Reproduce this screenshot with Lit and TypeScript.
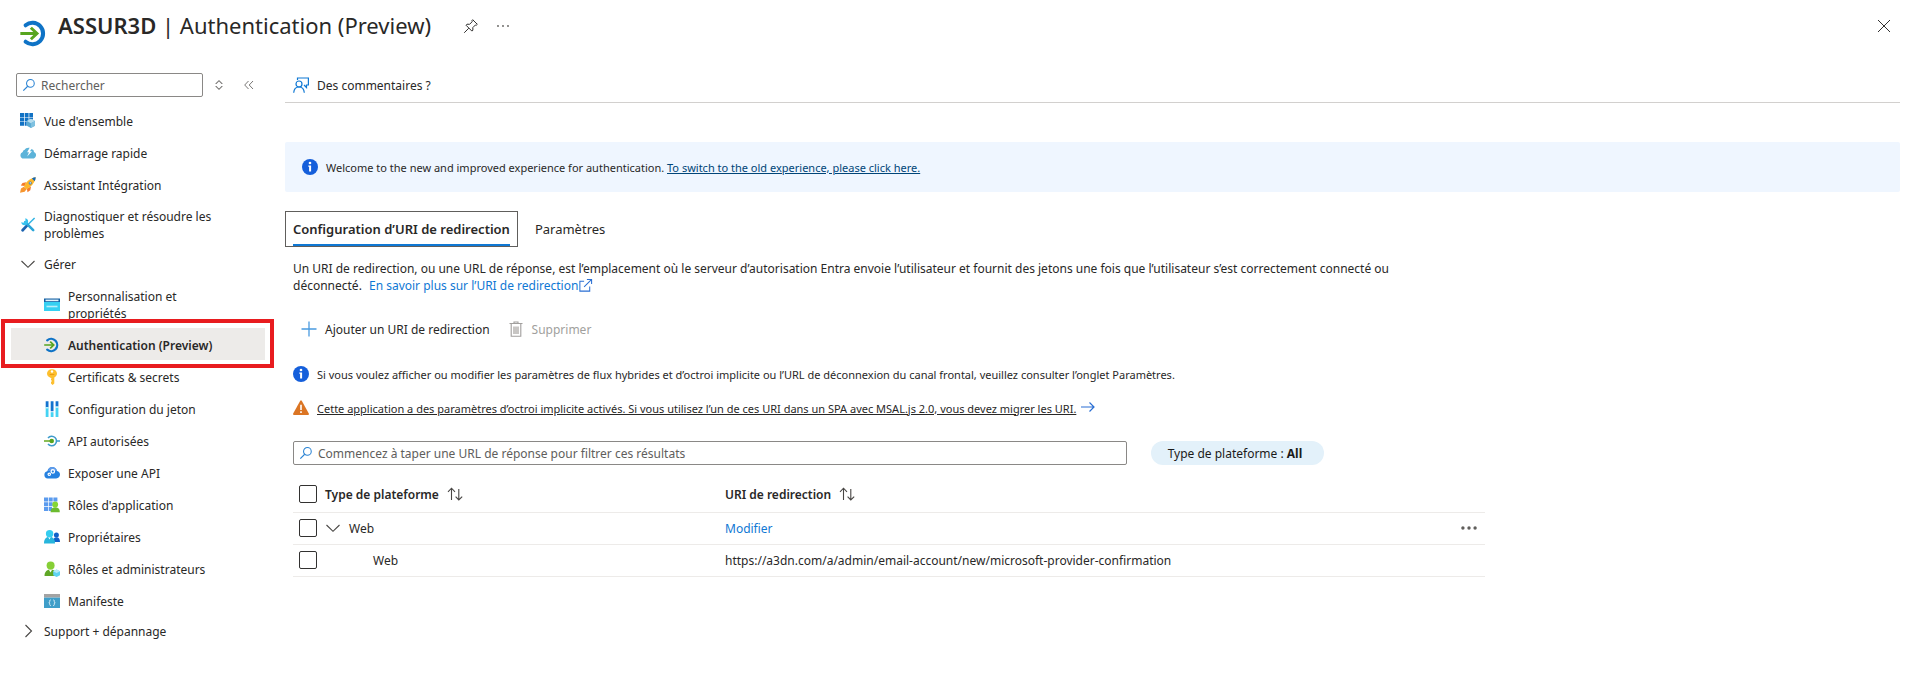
import { LitElement, html, css, svg, nothing, TemplateResult } from "lit";
import { customElement, state } from "lit/decorators.js";
import { classMap } from "lit/directives/class-map.js";

const icon = (body: TemplateResult, size = 16, box = "0 0 16 16") =>
  html`<svg class="icon" width=${size} height=${size} viewBox=${box} aria-hidden="true">${body}</svg>`;

const authShape = svg`
  <path d="M3.2 3.3A6.1 6.1 0 1 1 3.2 12.7" fill="none" stroke="#0f73c6" stroke-width="2.3" stroke-linecap="round"/>
  <path d="M.2 8H9.6M6.2 4.7 9.7 8 6.2 11.3" fill="none" stroke="#57a51f" stroke-width="1.7"/>`;

const search = svg`
  <circle cx="9.6" cy="6.2" r="4.4" fill="none" stroke="#2a83d3" stroke-width="1.2"/>
  <path d="M6.5 9.4 1.5 14.4" stroke="#2a83d3" stroke-width="1.3"/>`;

const info = svg`
  <circle cx="8" cy="8" r="8" fill="#155fdb"/>
  <circle cx="8" cy="4" r="1.3" fill="#fff"/>
  <path d="M6.3 6.500H9.100V12.600H7.100V7.800H6.300Z" fill="#fff"/>`;

const chevronDown = svg`<path d="M1.500 5 8 11.300 14.500 5" fill="none" stroke="#484644" stroke-width="1.1"/>`;
const chevronRight = svg`<path d="M5.500 2 11.500 8 5.500 14" fill="none" stroke="#484644" stroke-width="1.1"/>`;
const sortArrows = svg`<path d="M4.500 14V2.300M1 5.800 4.500 2.200 8 5.800M11.800 3V14M8.600 10.600 11.800 14 15.200 10.600" fill="none" stroke="#484644" stroke-width="1.1"/>`;

const glyphs: Record<string, TemplateResult> = {
  overview: svg`
    <g fill="#1272c4"><path d="M0 0h4v4H0zM4.700 0h3.900v4H4.700zM9.300 0h3.700v4H9.300zM0 4.600h4v3.800H0zM4.700 4.600h3.900v3.800H4.700zM9.300 4.600h3.700v2H9.300zM0 9h4v3.700H0zM4.700 9h2v3.700h-2z"/></g>
    <path d="M10.900 5.800 15 8v4.800L10.900 15 6.800 12.800V8z" fill="#5aa9d3"/>
    <path d="M10.900 5.800 15 8 10.900 10.200 6.800 8z" fill="#b4dcee"/><path d="M10.900 10.200 15 8v4.800L10.900 15z" fill="#7fc1e0"/>`,
  cloud: svg`
    <path d="M3.600 13.600A3.400 3.400 0 0 1 2.700 7 2.600 2.600 0 0 1 4.700 4.800C5.700 2.600 9.600 1.800 11.600 4.200 13.200 4.300 14 5.400 13.900 7c1.600.7 2.300 2 2.100 3.500-.2 1.900-1.700 3.100-3.400 3.100z" fill="#5cb3d9"/>
    <path d="M9.800 2.400 7.100 7.300H9L7.200 11.600 12 6.300H9.900L12.300 2.700z" fill="#fff"/>`,
  rocket: svg`
    <path d="M3.800 9.700 1 11.500 0 15.700 4.600 14.700 6.800 12z" fill="#f7952d"/>
    <path d="M6.300 5.200 2.500 6 .8 8.600 4.600 9zM11 9.600 10.300 13.200 7.500 15.300 6.900 11.500z" fill="#f47b2a"/>
    <path d="M15.700.3C11 .8 6.300 4.200 4 9.500L6.700 12.200C11.800 9.500 15.200 5 15.700.3z" fill="#fdb72c"/>
    <path d="M15.700.3C14.400.4 13 .8 11.900 1.400L14.700 4.200C15.300 3 15.700 1.600 15.700.3z" fill="#1268b8"/>
    <circle cx="10.200" cy="5.900" r="1.500" fill="#1a6fc4"/><circle cx="10.200" cy="5.900" r=".8" fill="#cfe8fa"/>`,
  tools: svg`
    <path d="M14.600 1 6.500 9" stroke="#33b4e3" stroke-width="1.500"/>
    <path d="M7.200 8.400 2.600 13.200" stroke="#1d63b0" stroke-width="2.800" stroke-linecap="round"/>
    <path d="M5.200 5.200 13.200 13.200" stroke="#2aa5d8" stroke-width="2.600" stroke-linecap="round"/>
    <path d="M5.300 1.200A3.500 3.500 0 1 1 1.200 5.300L3.500 5.700 5.500 3.700z" fill="#37c2ef"/>`,
  window: svg`
    <path d="M0 1.500h16V5H0z" fill="#115ea3"/><path d="M1.500 2.600h13v1.600h-13z" fill="#e6f4fb"/>
    <path d="M0 5h16v9H0z" fill="#35d0f2"/><path d="M2.500 8.700h11v1.600h-11z" fill="#b9effa"/>`,
  auth: authShape,
  key: svg`
    <path d="M8 .2c3.100 0 5 1.900 5 4.400 0 1.900-1.100 3-2.700 3.800v6L8.600 16 7 14.400v-1.300l1-1-1-1v-1l.7-.7L6 8.500C4.200 7.800 3 6.600 3 4.600 3 2.100 4.900.2 8 .2z" fill="#fdbf2e"/>
    <circle cx="8" cy="2.500" r="1.200" fill="#fff"/><path d="M5.700 5h4.600v.8H5.700z" fill="#e8930c"/>`,
  token: svg`
    <path d="M1.700.2h2.800V6H1.700zM6.700.2h2.800v10H6.700zM11.600.2h2.800v5.200h-2.800z" fill="#1373cf"/>
    <path d="M1.700 6h2.800v10H1.700zM11.600 6.500h2.800V16h-2.800z" fill="#45d3f3"/><path d="M1.700 6h2.800v1.500H1.700zM11.600 5.400h2.800v1.500h-2.800z" fill="#b9effa"/>
    <path d="M6.700 11.200h2.800V16H6.700z" fill="#45d3f3"/>`,
  api: svg`
    <path d="M4 4.900A4.800 4.800 0 1 1 4 11.100" fill="none" stroke="#3d9bcb" stroke-width="1.500"/>
    <path d="M12.300 8H16" stroke="#3d9bcb" stroke-width="1.500"/>
    <path d="M0 8H7" stroke="#6fae2c" stroke-width="1.600"/><circle cx="7.700" cy="8" r="2.300" fill="#57a51f"/>`,
  expose: svg`
    <path d="M3.700 13.500A3.700 3.700 0 0 1 3.300 6.200C4 3.600 5.800 2 8.200 2c2.500 0 4.400 1.700 4.900 4 1.800.3 2.900 1.700 2.900 3.600 0 2.200-1.600 3.900-3.800 3.900z" fill="#2581e0"/>
    <path d="M4 6C4.600 3.500 6.200 2 8.200 2c2.500 0 4.400 1.700 4.900 4z" fill="#5f9bea"/>
    <circle cx="8.800" cy="6.400" r="1.700" fill="none" stroke="#fff" stroke-width="1.300"/><circle cx="5.300" cy="9.300" r="1.200" fill="none" stroke="#fff" stroke-width="1.200"/>`,
  approles: svg`
    <path d="M0 .5h4v4H0zM4.700.5h4v4h-4zM9.400.5h4v4h-4zM0 5.200h4v4H0zM4.700 5.200h4v4h-4zM0 9.900h4v4H0zM4.700 9.900H8v4H4.700z" fill="#5b9bee"/>
    <path d="M6.600 15.200c0-3.400 1.700-4.900 4.600-4.900s4.600 1.500 4.600 4.900z" fill="#6cbb2f"/><circle cx="11.200" cy="7.500" r="2.900" fill="#86d633"/>`,
  owners: svg`
    <path d="M9 13c0-3 1.200-4.800 3.500-4.800S16 10 16 13z" fill="#1161c9"/><circle cx="12.400" cy="6" r="2.500" fill="#1161c9"/>
    <path d="M0 14.400C0 10.200 2 7.800 5.500 7.800S11 10.200 11 14.400z" fill="#28b5dc"/><path d="M4.200 8h2.600L5.500 10.500z" fill="#fff"/>
    <circle cx="5.600" cy="4.700" r="3.700" fill="#35cdf0"/>`,
  admins: svg`
    <path d="M.5 15C.5 11 2.600 8.500 6.500 8.500s6 2.500 6 6.500z" fill="#5fa726"/><path d="M4.800 8.500h3.400L6.500 11.500z" fill="#fff"/>
    <circle cx="6.600" cy="4.600" r="4" fill="#86cf36"/>
    <path d="M12.600 8.600 16 10.300v3.900L12.600 16 9.200 14.200v-3.900z" fill="#5fd3f2"/><path d="M12.600 8.600 16 10.300 12.600 12 9.200 10.300z" fill="#b5ecfa"/>`,
  manifest: svg`
    <path d="M0 1h16v3.600H0z" fill="#a3a3a3"/><path d="M0 4.600h16V15H0z" fill="#3f9ec9"/>
    <path d="M6.800 6.900c-1.300 0-1.100.7-1.100 1.700 0 .7-.2 1-.9 1.100.7.100.9.400.9 1.100 0 1-.2 1.800 1.100 1.800M9.200 6.900c1.300 0 1.100.7 1.100 1.700 0 .7.200 1 .9 1.100-.7.100-.9.400-.9 1.100 0 1 .2 1.800-1.100 1.800" fill="none" stroke="#e6f4fb" stroke-width=".9"/>`,
};

interface Entry { label: string; glyph: string; tall?: boolean; }

const general: Entry[] = [
  { label: "Vue d'ensemble", glyph: "overview" },
  { label: "Démarrage rapide", glyph: "cloud" },
  { label: "Assistant Intégration", glyph: "rocket" },
  { label: "Diagnostiquer et résoudre les problèmes", glyph: "tools", tall: true },
];

const manage: Entry[] = [
  { label: "Personnalisation et propriétés", glyph: "window", tall: true },
  { label: "Authentication (Preview)", glyph: "auth" },
  { label: "Certificats & secrets", glyph: "key" },
  { label: "Configuration du jeton", glyph: "token" },
  { label: "API autorisées", glyph: "api" },
  { label: "Exposer une API", glyph: "expose" },
  { label: "Rôles d'application", glyph: "approles" },
  { label: "Propriétaires", glyph: "owners" },
  { label: "Rôles et administrateurs", glyph: "admins" },
  { label: "Manifeste", glyph: "manifest" },
];

const base = css`
  * { box-sizing: border-box; }
  .icon { display: block; flex: none; }
  a { color: inherit; text-decoration: none; }
  button {
    display: flex; align-items: center; margin: 0; padding: 0; border: 0;
    background: none; color: inherit; font: inherit; cursor: pointer;
  }
  .search {
    display: flex; align-items: center; gap: 5px; height: 24px; padding: 0 5px;
    border: 1px solid #8a8886; border-radius: 2px; background: #fff;
  }
  .search input {
    flex: 1; min-width: 0; height: 20px; padding: 0; border: 0; outline: 0;
    background: none; color: #323130; font: inherit;
  }
  .search input::placeholder { color: #605e5c; opacity: 1; }
`;

@customElement("side-menu")
class SideMenu extends LitElement {
  @state() private current = "Authentication (Preview)";

  static styles = [base, css`
    :host { display: block; }
    .tools { display: flex; align-items: center; height: 24px; margin: 0 0 8px 16px; }
    .tools .search { width: 187px; }
    .order { margin-left: 8px; }
    .collapse { margin-left: 14px; }
    ul { margin: 0; padding: 0; list-style: none; }
    .item {
      position: relative; display: flex; align-items: center; gap: 8px;
      min-height: 32px; margin: 0 20px 0 11px; padding: 0 34px 0 9px; line-height: 17px;
    }
    .item.tall { min-height: 48px; }
    .nested .item { padding-left: 33px; padding-top: 2px; }
    .item.current { background: #edebe9; font-weight: 600; }
    .item.current::after {
      content: ""; position: absolute; inset: -9px -9px -8px -10px; border: 4px solid #e81c1f;
      z-index: 1; pointer-events: none;
    }
    .section { gap: 8px; height: 31px; margin-left: 20px; padding-bottom: 1px; }
  `];

  private entry(e: Entry) {
    const on = e.label === this.current;
    return html`<li><a href="#" class=${classMap({ item: true, tall: !!e.tall, current: on })}
      aria-current=${on ? "page" : nothing}
      @click=${(ev: Event) => { ev.preventDefault(); this.current = e.label; }}>
      ${icon(glyphs[e.glyph])}<span>${e.label}</span></a></li>`;
  }

  render() {
    return html`
      <nav aria-label="Menu">
        <div class="tools">
          <label class="search">${icon(search, 14)}<input type="text" placeholder="Rechercher" aria-label="Rechercher"></label>
          <button class="order" aria-label="Trier">${icon(svg`<path d="M5.300 6.300 8 3.700 10.700 6.300M5.300 9.700 8 12.300 10.700 9.700M5.100 7V6M10.900 7V6M5.100 10V9M10.900 10V9" fill="none" stroke="#797775" stroke-width="1.100"/>`)}</button>
          <button class="collapse" aria-label="Réduire">${icon(svg`<path d="M7.500 4 3.700 8 7.500 12M12 4 8.200 8 12 12" fill="none" stroke="#797775" stroke-width="1"/>`)}</button>
        </div>
        <ul>${general.map((e) => this.entry(e))}</ul>
        <button class="section" aria-expanded="true">${icon(chevronDown)}Gérer</button>
        <ul class="nested">${manage.map((e) => this.entry(e))}</ul>
        <button class="section" aria-expanded="false">${icon(chevronRight)}Support + dépannage</button>
      </nav>`;
  }
}

@customElement("app-root")
class AppRoot extends LitElement {
  static styles = [base, css`
    :host {
      display: block; min-height: 100vh; background: #fff; color: #292827;
      font: 12px/17px "Noto Sans", "Open Sans", sans-serif;
    }
    header { display: flex; align-items: flex-start; height: 73px; padding: 0 23px 0 20px; }
    .logo { margin: 19px 10px 0 0; }
    h1 { margin: 9px 0 0; font-size: 22px; line-height: 32px; font-weight: 400; }
    h1 strong { font-weight: 600; }
    .pin { margin: 18px 0 0 32px; }
    .more { margin: 18px 0 0 16px; }
    .close { margin: 18px 0 0 auto; }
    .layout { display: flex; }
    side-menu { flex: none; width: 285px; }
    main { flex: 1; min-width: 0; padding-right: 15px; }
    .commands { height: 30px; padding-left: 8px; border-bottom: 1px solid #d2d0ce; }
    .commands button { gap: 8px; height: 24px; }
    .banner {
      display: flex; align-items: center; gap: 8px; min-height: 50px; margin-top: 39px;
      padding: 0 17px; border-radius: 2px; background: #eff6ff; font-size: 11px;
    }
    .banner a { color: #004578; text-decoration: underline; }
    .tabs { display: flex; gap: 8px; margin-top: 19px; font-size: 13px; }
    .tab { height: 36px; padding: 0 8px; border: 1px solid transparent; }
    .tab span { display: flex; align-items: center; height: 34px; padding-top: 3px; border-bottom: 2px solid transparent; }
    .tab.on { padding: 0 7px; border-color: #605e5c; font-weight: 600; }
    .tab.on span { border-color: #0f78d4; }
    .body { padding: 13px 0 0 8px; }
    .intro { max-width: 1152px; margin: 0; }
    .intro a { color: #0f78d4; margin-left: 4px; }
    .intro .icon { display: inline-block; vertical-align: -3px; }
    .actions { display: flex; gap: 18px; margin: 19px 0 0 8px; height: 32px; }
    .actions button { gap: 8px; }
    .actions button:disabled { color: #a19f9d; cursor: default; }
    .note { display: flex; align-items: center; gap: 8px; height: 16px; margin: 21px 0 0; font-size: 11px; }
    .note + .note { margin-top: 18px; }
    .note a { text-decoration: underline; }
    .note a + .icon { margin-left: -4px; }
    .filters { display: flex; gap: 24px; margin-top: 25px; }
    .filters .search { width: calc(52% - 2px); }
    .pill { height: 24px; padding: 0 22px 0 17px; border-radius: 12px; background: #e3f1fa; color: #1b1a19; white-space: pre; }
    .pill strong { font-weight: 700; }
    table { width: calc(100% - 415px); margin-top: 12px; border-collapse: collapse; table-layout: fixed; }
    th, td { height: 32px; padding: 0; text-align: left; border-bottom: 1px solid #edebe9; }
    th { height: 35px; font-weight: 600; }
    .check { width: 32px; }
    .kind { width: 400px; }
    .dots { width: 24px; }
    .cell { display: flex; align-items: center; gap: 8px; }
    .child { padding-left: 48px; }
    td a { color: #0f78d4; }
    input[type="checkbox"] {
      appearance: none; display: block; width: 18px; height: 18px; margin: 0 0 0 6px;
      border: 1px solid #323130; border-radius: 2px; background: #fff;
    }
    input[type="checkbox"]:checked { background: #0f78d4; border-color: #0f78d4; }
  `];

  render() {
    return html`
      <header>
        <svg class="icon logo" width="28" height="29" viewBox="0 0 16 16" aria-hidden="true">${authShape}</svg>
        <h1><strong>ASSUR3D</strong> | Authentication (Preview)</h1>
        <button class="pin" aria-label="Épingler">${icon(svg`<path d="M9.700 1.700 14.300 6.300 13.300 7.200 12.400 7 9.800 9.600 9.900 12.200 8.900 13.100 3 7.200 4 6.200 6.600 6.300 9.200 3.700 8.900 2.700zM5.800 10.200 1.200 14.800" fill="none" stroke="#323130" stroke-width="1"/>`)}</button>
        <button class="more" aria-label="Plus">${icon(svg`<g fill="#605e5c"><circle cx="3" cy="8" r=".9"/><circle cx="8" cy="8" r=".9"/><circle cx="13" cy="8" r=".9"/></g>`)}</button>
        <button class="close" aria-label="Fermer">${icon(svg`<path d="M2 2 14 14M14 2 2 14" stroke="#323130" stroke-width="1"/>`)}</button>
      </header>
      <div class="layout">
        <side-menu></side-menu>
        <main>
          <div class="commands">
            <button>${icon(svg`<g fill="none" stroke="#0f78d4" stroke-width="1.200"><path d="M4.500 3V1H15.400V8H13.500V10.500L11 8"/><circle cx="6" cy="7" r="3"/><path d="M.7 15.800C1 12 3 10 6 10S11 12 11.300 15.800"/></g>`)}Des commentaires ?</button>
          </div>
          <div class="banner">${icon(info)}<span>Welcome to the new and improved experience for authentication. <a href="#">To switch to the old experience, please click here.</a></span></div>
          <div class="tabs" role="tablist">
            <button class="tab on" role="tab" aria-selected="true"><span>Configuration d’URI de redirection</span></button>
            <button class="tab" role="tab" aria-selected="false"><span>Paramètres</span></button>
          </div>
          <div class="body">
            <p class="intro">Un URI de redirection, ou une URL de réponse, est l’emplacement où le serveur d’autorisation Entra envoie l’utilisateur et fournit des jetons une fois que l’utilisateur s’est correctement connecté ou déconnecté. <a href="#">En savoir plus sur l’URI de redirection${icon(svg`<path d="M6.500 3.500H2V14H12.500V9M6.500 9.500 14 2M9.500 1.500H14.500V6.500" fill="none" stroke="#2a6fd3" stroke-width="1.100"/>`, 15)}</a></p>
            <div class="actions">
              <button>${icon(svg`<path d="M8 .5V15.500M.5 8H15.500" stroke="#4a9be0" stroke-width="1.300"/>`)}Ajouter un URI de redirection</button>
              <button disabled>${icon(svg`<path d="M1.500 2.500H14.500M6 2.500V1H10V2.500M3.200 2.500V15.300H12.800V2.500" fill="none" stroke="#a19f9d" stroke-width="1.100"/><path d="M5 5.500H11V13H5z" fill="#c8c6c4"/>`)}Supprimer</button>
            </div>
            <p class="note">${icon(info)}<span>Si vous voulez afficher ou modifier les paramètres de flux hybrides et d’octroi implicite ou l’URL de déconnexion du canal frontal, veuillez consulter l’onglet Paramètres.</span></p>
            <p class="note">${icon(svg`<path d="M7.100 1Q8 -.5 8.900 1L15.800 13.600Q16.300 15 15 15H1Q-.3 15 .2 13.600z" fill="#db7524"/><path d="M7.200 4.800H8.800V10H7.200zM7.200 11.300H8.800V12.900H7.200z" fill="#fff"/>`)}<a href="#">Cette application a des paramètres d’octroi implicite activés. Si vous utilisez l’un de ces URI dans un SPA avec MSAL.js 2.0, vous devez migrer les URI.</a>${icon(svg`<path d="M1 7H14M9.500 2.500 14 7 9.500 11.500" fill="none" stroke="#2a6fd3" stroke-width="1.200"/>`)}</p>
            <div class="filters">
              <label class="search">${icon(search, 14)}<input type="text" placeholder="Commencez à taper une URL de réponse pour filtrer ces résultats" aria-label="Filtrer les résultats"></label>
              <button class="pill">Type de plateforme : <strong>All</strong></button>
            </div>
            <table>
              <thead><tr>
                <th class="check"><input type="checkbox" aria-label="Tout sélectionner"></th>
                <th class="kind"><button class="cell">Type de plateforme ${icon(sortArrows)}</button></th>
                <th><button class="cell">URI de redirection ${icon(sortArrows)}</button></th>
                <th class="dots"></th>
              </tr></thead>
              <tbody>
                <tr>
                  <td><input type="checkbox" aria-label="Sélectionner le groupe Web"></td>
                  <td><button class="cell" aria-expanded="true">${icon(chevronDown)}Web</button></td>
                  <td><a href="#">Modifier</a></td>
                  <td><button aria-label="Actions">${icon(svg`<g fill="#605e5c"><circle cx="1.900" cy="8" r="1.700"/><circle cx="8" cy="8" r="1.700"/><circle cx="14.100" cy="8" r="1.700"/></g>`)}</button></td>
                </tr>
                <tr>
                  <td><input type="checkbox" aria-label="Sélectionner l’URI Web"></td>
                  <td class="child">Web</td>
                  <td>https://a3dn.com/a/admin/email-account/new/microsoft-provider-confirmation</td>
                  <td></td>
                </tr>
              </tbody>
            </table>
          </div>
        </main>
      </div>`;
  }
}
